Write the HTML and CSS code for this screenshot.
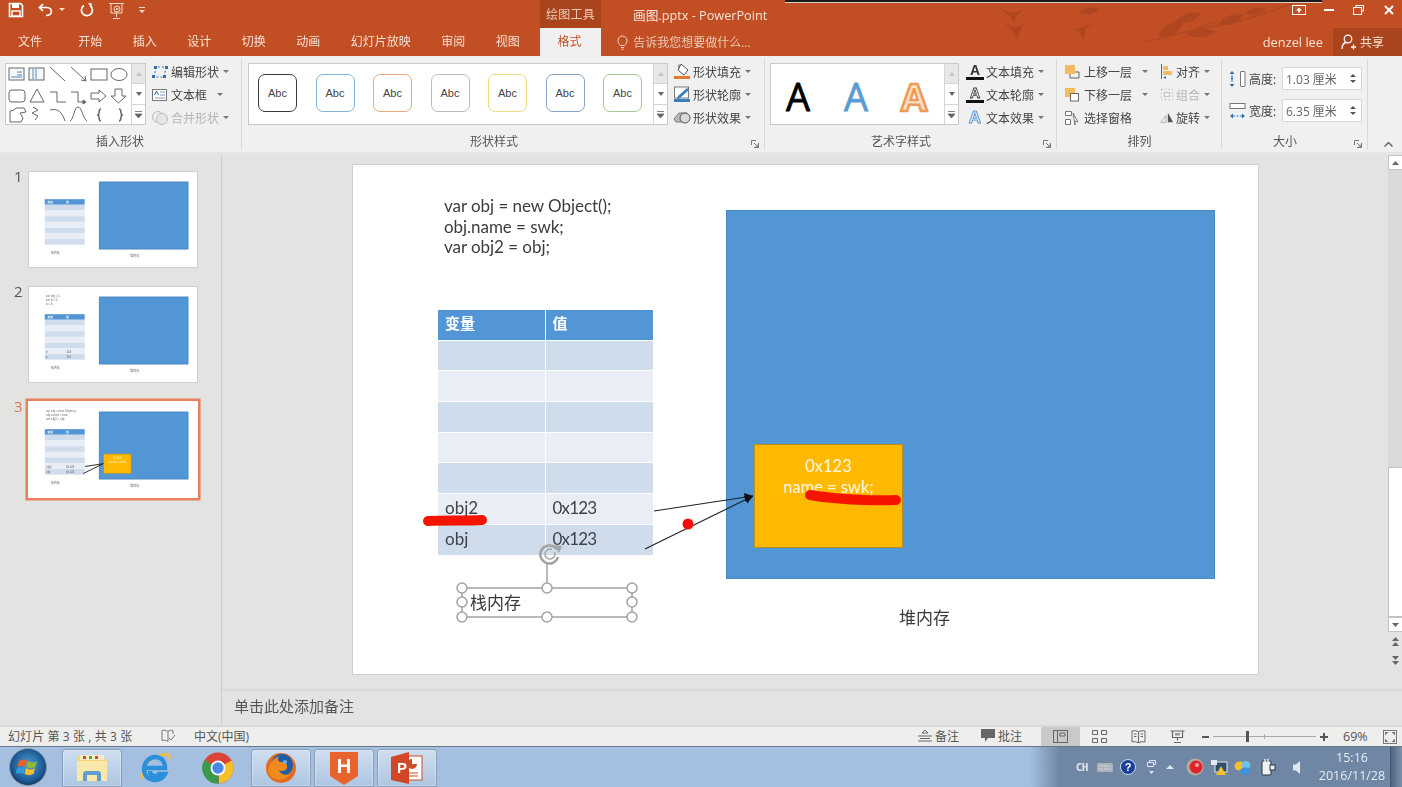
FILE: index.html
```html
<!DOCTYPE html>
<html lang="zh-CN">
<head>
<meta charset="utf-8">
<title>画图.pptx - PowerPoint</title>
<link rel="stylesheet" href="styles.css">
</head>
<body>
<svg class="defs" aria-hidden="true">
  <defs>
    <g id="thumb-base">
      <rect x="378" y="52" width="479" height="362" fill="#5296d5" stroke="#3f74a6" stroke-width="3"/>
      <rect x="85" y="145" width="215" height="30" fill="#5296d5"/>
      <rect x="85" y="175" width="215" height="31" fill="#cfdcec"/>
      <rect x="85" y="206" width="215" height="31" fill="#e8edf6"/>
      <rect x="85" y="237" width="215" height="30" fill="#cfdcec"/>
      <rect x="85" y="267" width="215" height="31" fill="#e8edf6"/>
      <rect x="85" y="298" width="215" height="31" fill="#cfdcec"/>
      <rect x="85" y="329" width="215" height="31" fill="#e8edf6"/>
      <rect x="85" y="360" width="215" height="30" fill="#cfdcec"/>
      <text x="100" y="165" class="th-w">变量</text>
      <text x="200" y="165" class="th-w">值</text>
      <text x="117" y="443" class="th-t">栈内存</text>
      <text x="546" y="458" class="th-t">堆内存</text>
    </g>
  </defs>
</svg>

<header class="head">
  <div class="ink-top"></div>
  <svg class="birds" width="440" height="56" viewBox="0 0 440 56">
    <g fill="#a8431e" opacity=".7">
      <path d="M100 8c4 1 7 3 9 5 2-1 4-1 5 0 3-2 6-3 9-3-3 2-5 4-7 7l-2 6-3-5c-3-4-7-7-11-10z"/>
      <path d="M103 22c4 1 7 3 9 5 2-1 3-1 5 0l8-3c-3 3-5 5-6 8l-1 8-4-6c-3-5-7-9-11-12z"/>
      <path d="M168 26l9 3 4-2 10-3c-3 3-5 5-6 8l-1 8-4-6c-3-4-7-6-12-8z"/>
      <path d="M178 12c8-5 16-5 22-3-6 6-14 7-22 3z"/>
      <path d="M258 36c4-10 14-15 26-14-4 10-14 16-26 14z"/>
      <path d="M275 22c6-8 16-11 26-9-5 8-14 12-26 9z"/>
      <path d="M318 24c6-8 16-12 26-10-5 9-15 13-26 10z"/>
      <path d="M288 35c8-6 18-7 28-4-8 7-18 8-28 4z"/>
      <path d="M345 13c6-5 14-6 22-4-6 6-14 7-22 4z"/>
    </g>
    <g fill="none" stroke="#a8431e" stroke-width="1.500" opacity=".65">
      <path d="M246 42c26-8 60-14 88-20s44-14 58-18"/>
      <path d="M286 36c10-8 18-12 32-14"/>
    </g>
  </svg>
  <div class="titlebar">
    <div class="qat">
      <svg width="16" height="16" viewBox="0 0 16 16" class="q1"><path d="M1.500 1.500h11l2 2v11h-13z" fill="none" stroke="#fff" stroke-width="1.600"/><rect x="4" y="2" width="7" height="4" fill="#fff"/><rect x="4" y="9" width="8" height="5" fill="none" stroke="#fff" stroke-width="1.400"/></svg>
      <svg width="16" height="14" viewBox="0 0 16 14" class="q2"><path d="M5 1L1.500 4.500 5 8" fill="none" stroke="#fff" stroke-width="1.700"/><path d="M2 4.500h7c6 0 6 8-1 8" fill="none" stroke="#fff" stroke-width="1.700"/></svg>
      <svg width="6" height="4" viewBox="0 0 6 4" class="q3"><path d="M0 0h6L3 3z" fill="#f3d9cc"/></svg>
      <svg width="14" height="14" viewBox="0 0 14 14" class="q4"><path d="M4 2.500A5.500 5.500 0 1 0 10.500 3" fill="none" stroke="#fff" stroke-width="1.700"/><path d="M8 0l4 .5-1 4z" fill="#fff"/></svg>
      <svg width="16" height="18" viewBox="0 0 16 18" class="q5"><path d="M0 1.500h15M2 2v9h11V2M7.500 11v4M4 16.500h7" fill="none" stroke="#f3d9cc" stroke-width="1"/><circle cx="8" cy="7" r="3" fill="none" stroke="#f3d9cc"/><path d="M7 5.500l3 1.500-3 1.500z" fill="#f3d9cc"/></svg>
      <svg width="6" height="6" viewBox="0 0 6 6" class="q6"><path d="M0 0h6v1H0zM0 3h6L3 6z" fill="#f3d9cc"/></svg>
    </div>
    <div class="tool-tab">绘图工具</div>
    <div class="doc-title">画图.pptx - PowerPoint</div>
    <div class="win">
      <svg width="14" height="10" viewBox="0 0 14 10"><rect x=".5" y=".5" width="13" height="9" fill="none" stroke="#fff"/><path d="M7 2.500l3 3H8v2H6v-2H4z" fill="#fff"/></svg>
      <svg width="10" height="2" viewBox="0 0 10 2" class="w2"><rect width="10" height="2" fill="#fff"/></svg>
      <svg width="11" height="10" viewBox="0 0 11 10" class="w3"><path d="M3 2V.5h7.500V6H8.500M.5 2.500h8V9.500h-8z" fill="none" stroke="#fff" stroke-width="1.100"/></svg>
      <svg width="10" height="10" viewBox="0 0 10 10" class="w4"><path d="M1 1l8 8M9 1l-8 8" stroke="#fff" stroke-width="2"/></svg>
    </div>
  </div>
  <nav class="tabs">
    <span class="tab first">文件</span><span class="tab">开始</span><span class="tab">插入</span><span class="tab">设计</span><span class="tab">切换</span><span class="tab">动画</span><span class="tab">幻灯片放映</span><span class="tab">审阅</span><span class="tab">视图</span>
    <span class="tab active">格式</span>
    <span class="tell">
      <svg width="11" height="15" viewBox="0 0 11 15"><path d="M3.500 10.500C2 9 1 8 1 5.500a4.500 4.500 0 0 1 9 0c0 2.500-1 3.500-2.500 5zM4 12.500h3M4.500 14.200h2" fill="none" stroke="#f3d9cc" stroke-width="1"/></svg>
      告诉我您想要做什么...
    </span>
    <span class="user">denzel lee</span>
    <span class="share">
      <svg width="15" height="16" viewBox="0 0 15 16"><circle cx="7" cy="5" r="3.800" fill="none" stroke="#fff" stroke-width="1.300"/><path d="M1 15c0-4 2-6 4-6.500M10 13h5M12.500 10.500v5" fill="none" stroke="#fff" stroke-width="1.300"/></svg>
      共享
    </span>
  </nav>
</header>

<section class="ribbon">
  <div class="group g1">
    <div class="gbody">
      <div class="gallery gal-shapes">
        <svg width="125" height="60" viewBox="0 0 125 60">
          <g fill="none" stroke="#666" stroke-width="1">
            <rect x="3" y="4" width="15" height="12" fill="#f5f8fc"/><path d="M11 8h5M11 11h5M5 13h11" stroke="#5a86b8"/>
            <rect x="23" y="4" width="15" height="12" fill="#f5f8fc"/><path d="M27 5v10M30 5v10" stroke="#5a86b8"/>
            <path d="M44 3l15 14"/>
            <path d="M65 3l15 14"/><path d="M80 17l-5-1M80 17l-1-5"/>
            <rect x="85" y="5" width="16" height="11"/>
            <ellipse cx="113" cy="10.500" rx="8" ry="6"/>
            <rect x="3" y="26" width="16" height="12" rx="3"/>
            <path d="M31 25l7 13H24z"/>
            <path d="M44 28h7v10h9"/>
            <path d="M65 28h7v10h8"/><path d="M80 38l-3-2v4z" fill="#666"/>
            <path d="M85 29h8v-3l7 6-7 6v-3h-8z"/>
            <path d="M109 25h7v7h4l-7.500 7-7.500-7h4z"/>
            <path d="M4 58V47l4-1 2-2h8l2 4-6 1 3 5-2 4z"/>
            <path d="M27 43l5 3-6 3 6 3-3 4" />
            <path d="M44 46c8-2 12 2 15 11"/>
            <path d="M64 57c4-2 4-14 8-14s5 12 9 14"/>
            <path d="M95 45c-3 0-1 5-3 6 2 1 0 6 3 6" stroke-width="1.500"/>
            <path d="M113 45c3 0 1 5 3 6-2 1 0 6-3 6" stroke-width="1.500"/>
          </g>
        </svg>
        <div class="scroller">
          <span class="sc off"><svg width="6" height="4" viewBox="0 0 6 4"><path d="M3 0l3 4H0z" fill="#c4c4c4"/></svg></span>
          <span class="sc"><svg width="6" height="4" viewBox="0 0 6 4"><path d="M0 0h6L3 4z" fill="#666"/></svg></span>
          <span class="sc"><svg width="7" height="7" viewBox="0 0 7 7"><path d="M0 .5h7M0 3h7L3.500 7z" stroke="#666" fill="#666" stroke-width=".8"/></svg></span>
        </div>
      </div>
      <div class="cmds c-edit">
        <div class="cmd"><svg class="ic" width="18" height="14" viewBox="0 0 18 14"><path d="M3 12L5 2h10l-2 10z" fill="none" stroke="#2e6fae" stroke-dasharray="2 2"/><rect x="3" y="1" width="3" height="3" fill="#2e6fae"/><rect x="14" y="1" width="3" height="3" fill="#2e6fae"/><rect x="1" y="10" width="3" height="3" fill="#2e6fae"/><rect x="12" y="10" width="3" height="3" fill="#2e6fae"/></svg>编辑形状<i class="car"></i></div>
        <div class="cmd"><svg class="ic" width="18" height="14" viewBox="0 0 18 14"><rect x="1.500" y="1.500" width="14" height="11" fill="#fff" stroke="#777"/><path d="M9 4h5M9 7h5M4 10h10" stroke="#7b9cc0"/><path d="M3.500 7L5.500 3l2 4" fill="none" stroke="#2e6fae"/></svg>文本框<i class="car far"></i></div>
        <div class="cmd dis"><svg class="ic" width="18" height="16" viewBox="0 0 18 16"><circle cx="7" cy="7" r="5.500" fill="none" stroke="#bbb"/><circle cx="11" cy="9" r="5.500" fill="#e6e6e6" stroke="#bbb"/></svg>合并形状<i class="car"></i></div>
      </div>
    </div>
    <div class="glabel">插入形状</div>
  </div>

  <div class="group g2">
    <div class="gbody">
      <div class="gallery gal-styles">
        <div class="abc-row">
          <span class="abc a1">Abc</span><span class="abc a2">Abc</span><span class="abc a3">Abc</span><span class="abc a4">Abc</span><span class="abc a5">Abc</span><span class="abc a6">Abc</span><span class="abc a7">Abc</span>
        </div>
        <div class="scroller">
          <span class="sc off"><svg width="6" height="4" viewBox="0 0 6 4"><path d="M3 0l3 4H0z" fill="#c4c4c4"/></svg></span>
          <span class="sc"><svg width="6" height="4" viewBox="0 0 6 4"><path d="M0 0h6L3 4z" fill="#666"/></svg></span>
          <span class="sc"><svg width="7" height="7" viewBox="0 0 7 7"><path d="M0 .5h7M0 3h7L3.500 7z" stroke="#666" fill="#666" stroke-width=".8"/></svg></span>
        </div>
      </div>
      <div class="cmds c-fill">
        <div class="cmd"><svg class="ic" width="18" height="17" viewBox="0 0 18 17"><path d="M8 1l7 6-4 5-6-5z" fill="#fff" stroke="#555"/><path d="M6 1.500v4" stroke="#555"/><rect x="1" y="13" width="16" height="3" fill="#e2792f"/></svg>形状填充<i class="car"></i></div>
        <div class="cmd"><svg class="ic" width="18" height="17" viewBox="0 0 18 17"><rect x="1.500" y="1" width="14" height="11" fill="#fff" stroke="#777"/><path d="M5 10l9-8 2 2-9 8-3 1z" fill="#3e7cc0"/><rect x="1" y="13" width="16" height="3" fill="#3e7cc0"/></svg>形状轮廓<i class="car"></i></div>
        <div class="cmd"><svg class="ic" width="18" height="16" viewBox="0 0 18 16"><path d="M1 9l5-6h8l-4 9H3z" fill="#bbb" stroke="#777"/><circle cx="12" cy="8" r="5" fill="#d9d9d9" stroke="#555"/></svg>形状效果<i class="car"></i></div>
      </div>
    </div>
    <div class="glabel">形状样式</div>
    <svg class="launch" width="8" height="8" viewBox="0 0 8 8"><path d="M.5 5V.5H5M7.500 3v4.500H3M3 3l4 4M7 4.500V7H4.500" fill="none" stroke="#777"/></svg>
  </div>

  <div class="group g3">
    <div class="gbody">
      <div class="gallery gal-art">
        <div class="art-row"><span class="art k">A</span><span class="art b">A</span><span class="art o">A</span></div>
        <div class="scroller">
          <span class="sc off"><svg width="6" height="4" viewBox="0 0 6 4"><path d="M3 0l3 4H0z" fill="#c4c4c4"/></svg></span>
          <span class="sc"><svg width="6" height="4" viewBox="0 0 6 4"><path d="M0 0h6L3 4z" fill="#666"/></svg></span>
          <span class="sc"><svg width="7" height="7" viewBox="0 0 7 7"><path d="M0 .5h7M0 3h7L3.500 7z" stroke="#666" fill="#666" stroke-width=".8"/></svg></span>
        </div>
      </div>
      <div class="cmds c-text">
        <div class="cmd"><span class="ta">A</span>文本填充<i class="car"></i></div>
        <div class="cmd"><span class="ta hollow">A</span>文本轮廓<i class="car"></i></div>
        <div class="cmd"><span class="ta glow">A</span>文本效果<i class="car"></i></div>
      </div>
    </div>
    <div class="glabel">艺术字样式</div>
    <svg class="launch" width="8" height="8" viewBox="0 0 8 8"><path d="M.5 5V.5H5M7.500 3v4.500H3M3 3l4 4M7 4.500V7H4.500" fill="none" stroke="#777"/></svg>
  </div>

  <div class="group g4">
    <div class="gbody">
      <div class="cmds c-order">
        <div class="cmd"><svg class="ic" width="16" height="15" viewBox="0 0 16 15"><rect x="1" y="1" width="10" height="9" fill="#f3bb62"/><path d="M11 8h4v6H6v-4" fill="none" stroke="#666"/></svg>上移一层<i class="car far"></i></div>
        <div class="cmd"><svg class="ic" width="16" height="15" viewBox="0 0 16 15"><rect x="1" y="1" width="10" height="9" fill="#f3bb62"/><rect x="6.500" y="6.500" width="8" height="7.500" fill="#fff" stroke="#666"/></svg>下移一层<i class="car far"></i></div>
        <div class="cmd"><svg class="ic" width="16" height="16" viewBox="0 0 16 16"><path d="M1.500 1.500h6v4h-6zM1.500 9.500h5v5h-5z" fill="#fff" stroke="#777"/><path d="M9 3l5 9-3-1v4z" fill="#fff" stroke="#777"/></svg>选择窗格</div>
      </div>
      <div class="cmds c-align">
        <div class="cmd"><svg class="ic" width="14" height="15" viewBox="0 0 14 15"><path d="M1.500 0v15" stroke="#666"/><rect x="3" y="2" width="5" height="4" fill="#f3bb62"/><rect x="3" y="7" width="9" height="4" fill="#f3bb62"/><path d="M6 12l-3 1.500 3 1.500z" fill="#3e7cc0"/></svg>对齐<i class="car"></i></div>
        <div class="cmd dis"><svg class="ic" width="14" height="15" viewBox="0 0 16 15"><rect x="1.500" y="1.500" width="13" height="12" fill="none" stroke="#bbb" stroke-dasharray="2 2"/><rect x="5" y="5" width="6" height="5" fill="none" stroke="#bbb"/></svg>组合<i class="car"></i></div>
        <div class="cmd"><svg class="ic" width="14" height="13" viewBox="0 0 16 13"><path d="M1 12l6-8v8z" fill="none" stroke="#aaa"/><path d="M9 1l6 11H9z" fill="#555"/></svg>旋转<i class="car"></i></div>
      </div>
    </div>
    <div class="glabel">排列</div>
  </div>

  <div class="group g5">
    <div class="gbody">
      <div class="sizes">
        <div class="size">
          <svg width="17" height="18" viewBox="0 0 17 18"><path d="M3 1l-2.500 3h5zM3 17l-2.500-3h5z" fill="#2e6fae"/><path d="M3 5v2M3 10v2" stroke="#2e6fae"/><rect x="2" y="7.500" width="2" height="2" fill="#2e6fae"/><rect x="11.500" y="1.500" width="4.500" height="15" rx=".5" fill="#fff" stroke="#777"/></svg>
          <span class="slabel">高度:</span>
          <span class="spin">1.03 厘米<span class="arrows"><i class="up"></i><i class="dn"></i></span></span>
        </div>
        <div class="size">
          <svg width="17" height="18" viewBox="0 0 17 18"><rect x="1" y="1.500" width="15" height="5" fill="#fff" stroke="#777"/><path d="M1 14l3-2.500v5zM16 14l-3-2.500v5z" fill="#2e6fae"/><path d="M4 14h9" stroke="#2e6fae" stroke-dasharray="2 1.500"/></svg>
          <span class="slabel">宽度:</span>
          <span class="spin">6.35 厘米<span class="arrows"><i class="up"></i><i class="dn"></i></span></span>
        </div>
      </div>
    </div>
    <div class="glabel">大小</div>
    <svg class="launch" width="8" height="8" viewBox="0 0 8 8"><path d="M.5 5V.5H5M7.500 3v4.500H3M3 3l4 4M7 4.500V7H4.500" fill="none" stroke="#777"/></svg>
  </div>
  <div class="collapse"><svg width="9" height="5" viewBox="0 0 9 5"><path d="M.5 4.500l4-4 4 4" fill="none" stroke="#666" stroke-width="1.500"/></svg></div>
</section>

<main class="main">
  <aside class="pane">
    <div class="thumb-row">
      <span class="num">1</span>
      <svg class="thumb" viewBox="0 0 905 509"><use href="#thumb-base"/></svg>
    </div>
    <div class="thumb-row">
      <span class="num">2</span>
      <svg class="thumb" viewBox="0 0 905 509">
        <use href="#thumb-base"/>
        <text x="90" y="50" class="th-t">var obj = 1;</text>
        <text x="90" y="72" class="th-t">var b = 2;</text>
        <text x="90" y="94" class="th-t">b = 3;</text>
        <text x="90" y="352" class="th-t">b</text><text x="200" y="352" class="th-t">123</text>
        <text x="90" y="382" class="th-t">a</text><text x="200" y="382" class="th-t">123</text>
      </svg>
    </div>
    <div class="thumb-row cur">
      <span class="num">3</span>
      <svg class="thumb" viewBox="0 0 905 509">
        <use href="#thumb-base"/>
        <text x="91" y="50" class="th-t">var obj = new Object();</text>
        <text x="91" y="72" class="th-t">obj.name = swk;</text>
        <text x="91" y="94" class="th-t">var obj2 = obj;</text>
        <text x="91" y="352" class="th-t">obj2</text><text x="200" y="352" class="th-t">0x123</text>
        <text x="91" y="382" class="th-t">obj</text><text x="200" y="382" class="th-t">0x123</text>
        <rect x="401" y="279" width="149" height="104" fill="#ffb900" stroke="#bd8e15" stroke-width="3"/>
        <text x="475" y="305" text-anchor="middle" class="th-y">0x123</text>
        <text x="475" y="328" text-anchor="middle" class="th-y">name = swk;</text>
        <path d="M301 346L400 331M292 384L400 331" stroke="#222" stroke-width="5"/>
      </svg>
    </div>
  </aside>

  <div class="work">
    <div class="stage-wrap">
      <div class="stage">
        <div class="slide">
          <div class="code">var obj = new Object();<br>obj.name = swk;<br>var obj2 = obj;</div>
          <div class="heap"></div>
          <div class="obj-box"><span>0x123</span><span>name = swk;</span></div>
          <div class="stack">
            <div class="cell hd">变量</div><div class="cell hd">值</div>
            <div class="cell d"></div><div class="cell d"></div>
            <div class="cell l"></div><div class="cell l"></div>
            <div class="cell d"></div><div class="cell d"></div>
            <div class="cell l"></div><div class="cell l"></div>
            <div class="cell d"></div><div class="cell d"></div>
            <div class="cell l">obj2</div><div class="cell l">0x123</div>
            <div class="cell d">obj</div><div class="cell d">0x123</div>
          </div>
          <div class="cap cap-stack">栈内存</div>
          <div class="cap cap-heap">堆内存</div>
          <svg class="overlay" width="905" height="509" viewBox="0 0 905 509">
            <defs>
              <marker id="arrow" markerWidth="8" markerHeight="8" refX="7" refY="3.500" orient="auto"><path d="M0 0l7 3.500L0 7z" fill="#111"/></marker>
            </defs>
            <path d="M301 346L400 331" stroke="#222" stroke-width="1.200" marker-end="url(#arrow)"/>
            <path d="M292 384L400 331" stroke="#222" stroke-width="1.200" marker-end="url(#arrow)"/>
            <circle cx="335" cy="359" r="5.500" fill="#f01010"/>
            <path d="M75 356C90 355 115 356 129 355" stroke="#f51400" stroke-width="10" stroke-linecap="round" fill="none"/>
            <path d="M457 330C475 333 500 336 543 335" stroke="#f51400" stroke-width="10" stroke-linecap="round" fill="none"/>
            <g fill="none" stroke="#a3a3a3" stroke-width="1.500">
              <path d="M194 397V423"/>
              <rect x="109" y="423" width="170" height="29"/>
              <path d="M203.500 384a9 9 0 1 0 1.500 8" stroke-width="2.500"/>
              <path d="M199 384.500a5 5 0 1 0 2.500 2.500"/>
            </g>
            <path d="M200 380l9 1-3 7z" fill="#a3a3a3"/>
            <g fill="#fff" stroke="#a3a3a3" stroke-width="1.500">
              <circle cx="109" cy="423" r="5"/><circle cx="194" cy="423" r="5"/><circle cx="279" cy="423" r="5"/>
              <circle cx="109" cy="437" r="5"/><circle cx="279" cy="437" r="5"/>
              <circle cx="109" cy="452" r="5"/><circle cx="194" cy="452" r="5"/><circle cx="279" cy="452" r="5"/>
            </g>
          </svg>
        </div>
      </div>
      <div class="vscroll">
        <span class="vbtn"><svg width="7" height="4" viewBox="0 0 7 4"><path d="M3.500 0L7 4H0z" fill="#666"/></svg></span>
        <span class="vtrack"></span>
        <span class="vthumb"></span>
        <span class="vbtn"><svg width="7" height="4" viewBox="0 0 7 4"><path d="M0 0h7L3.500 4z" fill="#666"/></svg></span>
        <span class="vjump"><svg width="7" height="9" viewBox="0 0 7 9"><path d="M3.500 0L7 4H0zM3.500 5L7 9H0z" fill="#666"/></svg></span>
        <span class="vjump"><svg width="7" height="9" viewBox="0 0 7 9"><path d="M0 0h7L3.500 4zM0 5h7L3.500 9z" fill="#666"/></svg></span>
      </div>
    </div>
    <div class="notes">单击此处添加备注</div>
  </div>
</main>

<footer class="status">
  <span class="st-count">幻灯片 第 3 张 , 共 3 张</span>
  <svg class="st-book" width="15" height="13" viewBox="0 0 15 13"><path d="M7 2.500C5 1 3 1 1 1.500v10c2-.5 4-.5 6 1zM7 2.500c1-1 3-1.500 5-1V5" fill="none" stroke="#777"/><path d="M8 9l2 2 4-5" fill="none" stroke="#777"/></svg>
  <span class="st-lang">中文(中国)</span>
  <span class="st-right">
    <span class="st-btn b-notes"><svg width="14" height="12" viewBox="0 0 14 12"><path d="M7 0l3 3H4zM0 6h14M2 8.500h10M0 11h14" fill="none" stroke="#666"/></svg>备注</span>
    <span class="st-btn b-comm"><svg width="14" height="13" viewBox="0 0 14 13"><path d="M0 0h14v9H7l-3 4V9H0z" fill="#666"/></svg>批注</span>
    <span class="view active"><svg width="15" height="13" viewBox="0 0 15 13"><rect x=".5" y=".5" width="14" height="12" fill="none" stroke="#666"/><path d="M4.500 1v11M7 3h5v3H7z" fill="none" stroke="#666"/></svg></span>
    <span class="view"><svg width="15" height="13" viewBox="0 0 15 13"><path d="M.5.5h5v4h-5zM9.500.5h5v4h-5zM.5 8.500h5v4h-5zM9.500 8.500h5v4h-5z" fill="none" stroke="#666"/></svg></span>
    <span class="view"><svg width="15" height="13" viewBox="0 0 15 13"><path d="M7.500 2C5.500.5 3 .5 1 1v11c2-.5 4.500-.5 6.500 1 2-1.500 4.500-1.500 6.500-1V1c-2-.5-4.500-.5-6.500 1zM7.500 2v11M3 4h2.500M3 6.500h2.500M9.500 4H12M9.500 6.500H12" fill="none" stroke="#666"/></svg></span>
    <span class="view"><svg width="15" height="13" viewBox="0 0 15 13"><path d="M.5 1h14M2.500 1.500v6h10v-6M7.500 7.500v3M4 12.500h7" fill="none" stroke="#666" stroke-width="1.200"/><rect x="5" y="3" width="5" height="2.500" fill="#999"/></svg></span>
    <span class="zoom">
      <i class="zminus"></i>
      <span class="zbar"><span class="ztick"></span><span class="zthumb"></span></span>
      <i class="zplus"></i>
    </span>
    <span class="zpct">69%</span>
    <svg class="zfit" width="14" height="14" viewBox="0 0 14 14"><rect x=".5" y=".5" width="13" height="13" fill="none" stroke="#777"/><path d="M2 2h3.500L2 5.500zM12 2H8.500L12 5.500zM2 12h3.500L2 8.500zM12 12H8.500L12 8.500z" fill="#777"/></svg>
  </span>
</footer>

<div class="taskbar">
  <span class="orb">
    <svg width="38" height="38" viewBox="0 0 38 38">
      <defs>
        <radialGradient id="orbg" cx=".5" cy=".45" r=".6"><stop offset="0" stop-color="#4f9fd6"/><stop offset=".7" stop-color="#1d5a96"/><stop offset="1" stop-color="#0e2b4f"/></radialGradient>
      </defs>
      <circle cx="19" cy="19" r="18.500" fill="url(#orbg)" stroke="#8b9aa9"/>
      <path d="M10 13c3-2 6-2 8 0l-1.500 6c-2-1.500-5-1.500-8 0z" fill="#e8622a"/>
      <path d="M19 13c3 2 6 2 9 0l-1.500 6c-3 1.500-6 1.500-9 0z" fill="#8ebd2d"/>
      <path d="M8 20c3-1.500 6-1.500 8 0l-1.500 6c-2-1.500-5-1.500-8 0z" fill="#2e9bdc"/>
      <path d="M17 20c3 2 6 2 9 0l-1.500 6c-3 1.500-6 1.500-9 0z" fill="#f6c02a"/>
    </svg>
  </span>
  <span class="tb on i1">
    <svg width="34" height="30" viewBox="0 0 34 30"><path d="M2 3h10l3 3h17v22H2z" fill="#f2d675"/><path d="M2 8h30v20H2z" fill="#f9e8a9"/><rect x="5" y="2" width="24" height="5" fill="#f6edc8"/><rect x="8" y="3" width="3" height="3" fill="#d8463a"/><rect x="14" y="3" width="3" height="3" fill="#62a23c"/><rect x="20" y="3" width="3" height="3" fill="#d8463a"/><path d="M8 28v-7c0-2 2-3 3-3h12c2 0 3 1 3 3v7h-4v-6H12v6z" fill="#5f9fd3"/></svg>
  </span>
  <span class="tb i2">
    <svg width="34" height="34" viewBox="0 0 34 34"><path d="M5 28C1 20 9 6 28 3c3 0 4 2 3 5" fill="none" stroke="#f0c23e" stroke-width="2.500"/><path d="M8 17h19c0-8-5-11-10-11S6 11 6 18s5 11 11 11c5 0 8-2 10-6h-6c-1 2-2 2-4 2-3 0-5-2-5-5" fill="none" stroke="#2c8fdb" stroke-width="4.500"/></svg>
  </span>
  <span class="tb i3">
    <svg width="32" height="32" viewBox="0 0 32 32"><circle cx="16" cy="16" r="15.500" fill="#dc4437"/><path d="M16 16L29.500 8.500A15.500 15.500 0 0 1 17 31.500z" fill="#f6c02a"/><path d="M16 16L17 31.500A15.500 15.500 0 0 1 2.500 8z" fill="#3a9a4b"/><circle cx="16" cy="16" r="7.500" fill="#fff"/><circle cx="16" cy="16" r="5.700" fill="#4a88e8"/></svg>
  </span>
  <span class="tb on i4">
    <svg width="32" height="32" viewBox="0 0 32 32"><circle cx="16" cy="16" r="15" fill="#e56a1f"/><circle cx="17" cy="13" r="11" fill="#1f5ea8"/><path d="M3 18C5 10 9 6 14 4c-2 3-1 5 1 6 5 0 8 2 7 6-1 3-6 4-8 2 1 4 6 6 11 4-3 5-9 7-14 5C6 26 3 22 3 18z" fill="#f08a1d"/><circle cx="20" cy="10" r="2" fill="#74b4ec"/></svg>
  </span>
  <span class="tb on i5">
    <svg class="shield" width="28" height="33" viewBox="0 0 28 33"><path d="M0 0h28v24l-14 9-14-9z" fill="#e8642c"/></svg>
    <span class="h-mark">H</span>
  </span>
  <span class="tb on i6">
    <svg class="pp" width="32" height="32" viewBox="0 0 32 32"><rect x="14" y="4" width="17" height="24" fill="#fff" stroke="#c94f27"/><path d="M18 21h9M18 24h9" stroke="#c94f27"/><path d="M21 7a5 5 0 1 0 5 5h-5z" fill="#c94f27"/><path d="M0 5l18-5v32L0 28z" fill="#d24726"/></svg>
    <span class="p-mark">P</span>
  </span>
  <span class="tray">
    <span class="t-ch">CH</span>
    <svg class="t-kb" width="18" height="11" viewBox="0 0 18 11"><rect x=".5" y=".5" width="17" height="10" rx="2" fill="#a9b2bd" stroke="#7a8592"/><path d="M3 4h12M3 7h12" stroke="#dde2e8" stroke-dasharray="1.500 1"/></svg>
    <span class="t-help">?</span>
    <svg class="t-small" width="9" height="15" viewBox="0 0 9 15"><path d="M2.500 2.500V.5h6v4H6.500M.5 2.500h6v4h-6z" fill="none" stroke="#dfe6ee"/><path d="M2 11h5l-2.500 3z" fill="#dfe6ee"/></svg>
    <svg class="t-up" width="8" height="4" viewBox="0 0 8 4"><path d="M4 0l4 4H0z" fill="#dfe6ee"/></svg>
    <svg class="t-red" width="18" height="18" viewBox="0 0 18 18"><circle cx="9" cy="9" r="8.500" fill="#b7a99c"/><circle cx="10" cy="9" r="6.500" fill="#e0222a"/><circle cx="11" cy="7" r="2" fill="#f9a2a2"/></svg>
    <svg class="t-net" width="18" height="17" viewBox="0 0 18 17"><rect x="5" y="3" width="12" height="10" fill="#2e4f70" stroke="#e5e9ee"/><rect x="1" y="1" width="6" height="5" fill="#e5e9ee"/><path d="M11 7l5 9H6z" fill="#f6c02a"/></svg>
    <svg class="t-cloud" width="18" height="15" viewBox="0 0 18 15"><ellipse cx="6" cy="6" rx="5.500" ry="4.500" fill="#f6c02a"/><ellipse cx="12" cy="5" rx="4.500" ry="4" fill="#6fc0ee"/><ellipse cx="11" cy="11" rx="5" ry="3.500" fill="#3a93dc"/></svg>
    <svg class="t-pow" width="15" height="17" viewBox="0 0 15 17"><rect x="1" y="2" width="9" height="14" rx="1" fill="#eef1f4" stroke="#2b3440"/><rect x="9" y="6" width="5" height="5" fill="#eef1f4" stroke="#2b3440"/><path d="M4 0v3M7 0v3" stroke="#eef1f4" stroke-width="1.500"/></svg>
    <svg class="t-spk" width="8" height="13" viewBox="0 0 8 13"><path d="M7 0v13L3 9.500H0v-6h3z" fill="#dfe6ee"/></svg>
    <span class="clock"><span>15:16</span><span>2016/11/28</span></span>
  </span>
  <span class="desk"></span>
</div>
</body>
</html>
```
FILE: styles.css
```css
* { box-sizing: border-box; }
html, body { margin: 0; padding: 0; }
body {
  width: 1402px;
  height: 787px;
  overflow: hidden;
  display: flex;
  flex-direction: column;
  position: relative;
  font-family: "Open Sans", "Noto Sans CJK SC", sans-serif;
  font-size: 12px;
  color: #444;
  background: #e3e4e2;
  filter: blur(.5px);
}
.defs { position: absolute; width: 0; height: 0; }
svg { display: block; flex: none; }
i { display: block; font-style: normal; }

/* Header */
.head { position: relative; height: 56px; flex: none; background: #c24f24; color: #fff; }
.ink-top { position: absolute; left: 785px; top: 0; width: 537px; height: 3px; background: #1c1c1c; border-bottom: 1px solid #d8cfc8; }
.birds { position: absolute; left: 900px; top: 0; }
.titlebar { position: relative; height: 28px; display: flex; }
.qat { width: 540px; display: flex; align-items: center; padding-left: 8px; }
.q1 { margin-top: -8px; }
.q2 { margin: -8px 0 0 14px; }
.q3 { margin: -8px 0 0 5px; }
.q4 { margin: -8px 0 0 15px; }
.q5 { margin: -6px 0 0 15px; }
.q6 { margin: -8px 0 0 14px; }
.tool-tab { width: 61px; height: 28px; background: #a9441d; color: #eec9b6; display: flex; align-items: center; justify-content: center; padding-bottom: 1px; letter-spacing: .2px; font-size: 12px; }
.doc-title { margin-left: 32px; color: #f7e2d8; font-size: 12.700px; line-height: 30px; }
.win { margin-left: auto; display: flex; align-items: center; padding: 0 8px 8px 0; }
.w2 { margin-left: 18px; }
.w3 { margin-left: 19px; }
.w4 { margin-left: 20px; }
.tabs { position: relative; height: 28px; display: flex; align-items: center; font-size: 12px; color: #f6e0d5; }
.tab { padding: 0 15.250px; line-height: 28px; white-space: nowrap; }
.tab.first { width: 63px; padding: 0 0 0 18px; }
.tab.active { margin-left: 5px; width: 61px; padding: 0 2px 0 0; text-align: center; background: #eff0ef; color: #c24f24; }
.tell { display: flex; align-items: center; gap: 5px; margin-left: 16px; font-size: 12px; color: #eec9b6; }
.user { margin-left: auto; margin-right: 10px; color: #f7e2d8; font-size: 12.800px; }
.share { width: 69px; height: 28px; background: #a9441d; display: flex; align-items: center; gap: 4px; padding-left: 8px; color: #f7e2d8; }

/* Ribbon */
.ribbon { position: relative; flex: none; height: 99px; display: flex; background: #eff0ef; border-bottom: 3px solid #e5e6e4; }
.group { position: relative; display: flex; flex-direction: column; height: 90px; margin-top: 3px; border-right: 1px solid #d8d9d7; }
.g1 { width: 242px; padding-left: 5px; }
.g2 { width: 523px; padding-left: 6px; }
.g3 { width: 292px; padding-left: 5px; }
.g4 { width: 165px; padding-left: 7px; }
.g5 { width: 146px; padding-left: 7px; }
.gbody { display: flex; flex: none; height: 75px; padding-top: 4px; }
.glabel { flex: none; text-align: center; font-size: 12px; line-height: 16px; color: #555; }
.g1 .glabel { padding-right: 6px; }
.g2 .glabel { padding-right: 24px; }
.g3 .glabel { padding-right: 24px; }
.g4 .glabel { padding-right: 6px; }
.g5 .glabel { padding-right: 26px; }
.launch { position: absolute; right: 5px; bottom: 1px; }
.gallery { display: flex; height: 62px; border: 1px solid #c9cac8; background: #fff; }
.gal-shapes { width: 141px; }
.gal-styles { width: 420px; }
.gal-art { width: 189px; }
.scroller { margin-left: auto; width: 14px; display: flex; flex-direction: column; border-left: 1px solid #d5d6d4; }
.sc { flex: 1; display: flex; align-items: center; justify-content: center; border-bottom: 1px solid #d5d6d4; background: #fff; }
.sc:last-child { border-bottom: 0; }
.sc.off { background: #e7e8e6; }
.cmds { display: flex; flex-direction: column; margin-top: -3px; }
.cmd { height: 23px; display: flex; align-items: center; white-space: nowrap; font-size: 12px; color: #444; }
.cmd.dis { color: #b4b4b4; }
.ic { margin-right: 2px; }
.car { width: 0; height: 0; margin-left: 4px; border: 3px solid transparent; border-top: 3px solid #777; border-bottom: 0; }
.car.far { margin-left: 10px; }
.c-edit { margin-left: 5px; }
.c-fill { margin-left: 5px; }
.c-text { margin-left: 7px; }
.c-order { width: 96px; }
.c-order .ic { margin-right: 4px; }
.abc-row { display: flex; padding: 10px 0 0 9px; gap: 18.500px; }
.abc { width: 39px; height: 38px; border: 1.500px solid #333; border-radius: 7px; display: flex; align-items: center; justify-content: center; font: 11px "Liberation Sans", sans-serif; color: #444; background: #fff; }
.a1 { border-color: #3a3a3a; }
.a2 { border-color: #84b2da; }
.a3 { border-color: #e9ab7c; }
.a4 { border-color: #bcbcbc; }
.a5 { border-color: #f1da84; }
.a6 { border-color: #86a1ca; }
.a7 { border-color: #a7c693; }
.art-row { display: flex; padding-left: 13px; gap: 30px; }
.art { width: 28px; font: 400 38px/65px "Open Sans", sans-serif; text-align: center; -webkit-text-stroke: .8px currentColor; }
.art.k { color: #000; }
.art.b { color: #5b9bd5; }
.art.o { color: #fbe0c8; -webkit-text-stroke: 2.500px #ef9a55; font-weight: 700; }
.ta { width: 18px; margin-right: 2px; font: 700 14px/14px "Liberation Sans", sans-serif; color: #333; text-align: center; border-bottom: 3px solid #111; }
.ta.hollow { color: #fff; -webkit-text-stroke: .8px #333; }
.ta.glow { border-bottom: 0; color: #eaf3fb; -webkit-text-stroke: 1px #5c9bd6; font-size: 17px; }
.sizes { display: flex; flex-direction: column; gap: 9px; padding-top: 4px; }
.size { display: flex; align-items: center; height: 23px; }
.slabel { margin-left: 3px; width: 33px; font-size: 12px; }
.spin { width: 80px; height: 23px; background: #fff; border: 1px solid #d9dad8; display: flex; align-items: center; padding-left: 3px; font-size: 12px; color: #666; position: relative; }
.arrows { margin-left: auto; margin-right: 5px; display: flex; flex-direction: column; gap: 3px; }
.arrows .up { border: 3px solid transparent; border-bottom: 3px solid #555; border-top: 0; }
.arrows .dn { border: 3px solid transparent; border-top: 3px solid #555; border-bottom: 0; }
.collapse { flex: 1; display: flex; justify-content: center; align-items: flex-end; padding: 0 0 5px 6px; }

/* Main */
.main { flex: none; height: 570px; display: flex; background: #e3e4e2; }
.pane { width: 222px; flex: none; border-right: 1px solid #cfd0ce; padding-top: 17px; display: flex; flex-direction: column; gap: 20px; }
.thumb-row { position: relative; height: 95px; padding-left: 29px; }
.num { position: absolute; left: 14px; top: -6px; font-size: 15px; line-height: 20px; color: #555; }
.thumb { width: 168px; height: 95px; background: #fff; box-shadow: 0 0 0 1px #cfd0ce; }
.cur .num { color: #e2734a; }
.cur .thumb { box-shadow: 0 0 0 1px #fff, 0 0 0 3.500px #e8805c; }
.th-w { font: 700 14px "Noto Sans CJK SC", sans-serif; fill: #fff; }
.th-t { font: 16px "Noto Sans CJK SC", sans-serif; fill: #666; }
.th-y { font: 17px "Noto Sans CJK SC", sans-serif; fill: #fff3d0; }
.work { flex: 1; min-width: 0; display: flex; flex-direction: column; }
.stage-wrap { flex: 1; min-height: 0; display: flex; }
.stage { flex: 1; padding: 10px 0 0 131px; }
.slide { position: relative; width: 905px; height: 509px; background: #fff; box-shadow: 0 0 0 1px #cfd0ce; font-family: Lato, "Noto Sans CJK SC", sans-serif; }
.code { position: absolute; left: 91px; top: 31px; font-size: 17px; line-height: 20.500px; color: #3c3c3c; letter-spacing: -.05px; }
.heap { position: absolute; left: 373px; top: 45px; width: 489px; height: 369px; background: #5296d5; border: 1px solid #4b88c0; }
.obj-box { position: absolute; left: 401px; top: 279px; width: 149px; height: 104px; background: #ffb900; border: 1.500px solid #b98d1d; display: flex; flex-direction: column; align-items: center; padding-top: 11px; color: #fff6e0; font-size: 16.500px; line-height: 21px; }
.stack { position: absolute; left: 85px; top: 145px; width: 215px; display: grid; grid-template-columns: 108px 107px; grid-auto-rows: 30.700px; gap: 0; }
.cell { border-right: 1.500px solid #fff; border-bottom: 1.500px solid #fff; display: flex; align-items: center; padding: 0 0 2px 7px; font-size: 17px; color: #3e4248; }
.cell:nth-child(even) { border-right: 0; padding-left: 6.500px; letter-spacing: -.8px; }
.cell.hd { background: #5296d5; color: #fff; font: 700 15px "Noto Sans CJK SC", sans-serif; padding-bottom: 4px; letter-spacing: 0; }
.cell.d { background: #cfdcec; }
.cell.l { background: #e8edf6; }
.cap { position: absolute; font: 17px/22px "Noto Sans CJK SC", sans-serif; color: #3a3a3a; }
.cap-stack { left: 117px; top: 426px; }
.cap-heap { left: 546px; top: 441px; }
.overlay { position: absolute; left: 0; top: 0; }
.vscroll { width: 14px; flex: none; display: flex; flex-direction: column; }
.vbtn { height: 15px; flex: none; background: #fff; border: 1px solid #c4c5c3; border-right: 0; display: flex; align-items: center; justify-content: center; }
.vtrack { height: 297px; background: #d9dad8; }
.vthumb { height: 150px; background: #fff; border: 1px solid #c0c1bf; border-right: 0; }
.vjump { height: 19px; display: flex; align-items: center; justify-content: center; }
.notes { height: 36px; flex: none; margin-top: -1px; border-top: 2px solid #d8d9d7; padding-left: 12px; font: 15px/30px "Noto Sans CJK SC", sans-serif; color: #555; }

/* Status bar */
.status { height: 21px; flex: none; display: flex; align-items: center; background: #eeefed; border-top: 2px solid #d8d9d7; padding-bottom: 2px; font-size: 12px; color: #555; position: relative; }
.st-count { margin-left: 8px; width: 153px; white-space: nowrap; letter-spacing: .1px; }
.st-lang { margin-left: 18px; }
.st-right { margin-left: auto; display: flex; align-items: center; height: 19px; margin-top: 2px; }
.st-btn { display: flex; align-items: center; gap: 3px; margin-top: -2px; }
.b-comm { margin-left: 22px; }
.view { width: 39px; height: 19px; display: flex; align-items: center; justify-content: center; }
.view.active { background: #c9cac8; margin-left: 19px; }
.zoom { display: flex; align-items: center; margin-left: 5px; }
.zminus { width: 7px; height: 2px; background: #555; }
.zbar { position: relative; width: 103px; height: 1px; margin: 0 4px; background: #a8a9a7; }
.zthumb { position: absolute; left: 33px; top: -5px; width: 3px; height: 11px; background: #555; }
.ztick { position: absolute; left: 51px; top: -2px; width: 1px; height: 5px; background: #aaa; }
.zplus { position: relative; width: 8px; height: 2px; background: #555; }
.zplus::after { content: ""; position: absolute; left: 3px; top: -3px; width: 2px; height: 8px; background: #555; }
.zpct { margin-left: 15px; width: 26px; color: #555; font-size: 12.500px; }
.zfit { margin: 0 5px 0 14px; }

/* Taskbar */
.taskbar { height: 41px; flex: none; display: flex; align-items: flex-end; background: linear-gradient(90deg, #a4bfdf 0, #a4bfdf 1030px, #6f87a5 1060px, #6f87a5 100%); border-top: 1px solid #65788c; }
.orb { width: 62px; height: 40px; display: flex; align-items: center; padding-left: 9px; }
.tb { position: relative; width: 60px; height: 38px; margin-right: 3px; display: flex; align-items: center; justify-content: center; border: 1px solid transparent; border-radius: 3px 3px 0 0; }
.tb.on { background: linear-gradient(180deg, #cfdeef, #aec6e2); border-color: #8a9fb7; box-shadow: inset 0 0 0 1px rgba(255,255,255,.3); }
.h-mark { position: absolute; left: 0; right: 0; top: 3px; text-align: center; color: #fff; font: 700 20px/26px "Liberation Sans", sans-serif; }
.p-mark { position: absolute; left: 19px; top: 7px; color: #fff; font: 700 15px/22px "Liberation Sans", sans-serif; }
.tray { margin-left: auto; height: 40px; display: flex; align-items: center; color: #e7edf4; position: relative; }
.t-ch { font: 700 11px "DejaVu Sans Mono", monospace; color: #dfe6ee; margin-right: 8px; letter-spacing: -.5px; }
.t-help { width: 16px; height: 16px; margin-left: 6px; border-radius: 50%; background: #1b3f9c; border: 1px solid #cfd8e6; color: #fff; font: 700 11px/14px "Liberation Sans", sans-serif; text-align: center; }
.t-small { margin-left: 11px; }
.t-up { margin-left: 10px; }
.t-red { margin-left: 12px; }
.t-net { margin-left: 6px; }
.t-cloud { margin-left: 6px; }
.t-pow { margin-left: 9px; }
.t-spk { margin-left: 17px; }
.clock { width: 70px; margin-left: 16px; margin-right: 3px; display: flex; flex-direction: column; align-items: center; font-size: 12.500px; line-height: 18px; color: #e7edf4; }
.desk { width: 12px; height: 40px; background: linear-gradient(90deg, #54647a, #7c92ad); border-left: 1px solid #46566a; }
```
